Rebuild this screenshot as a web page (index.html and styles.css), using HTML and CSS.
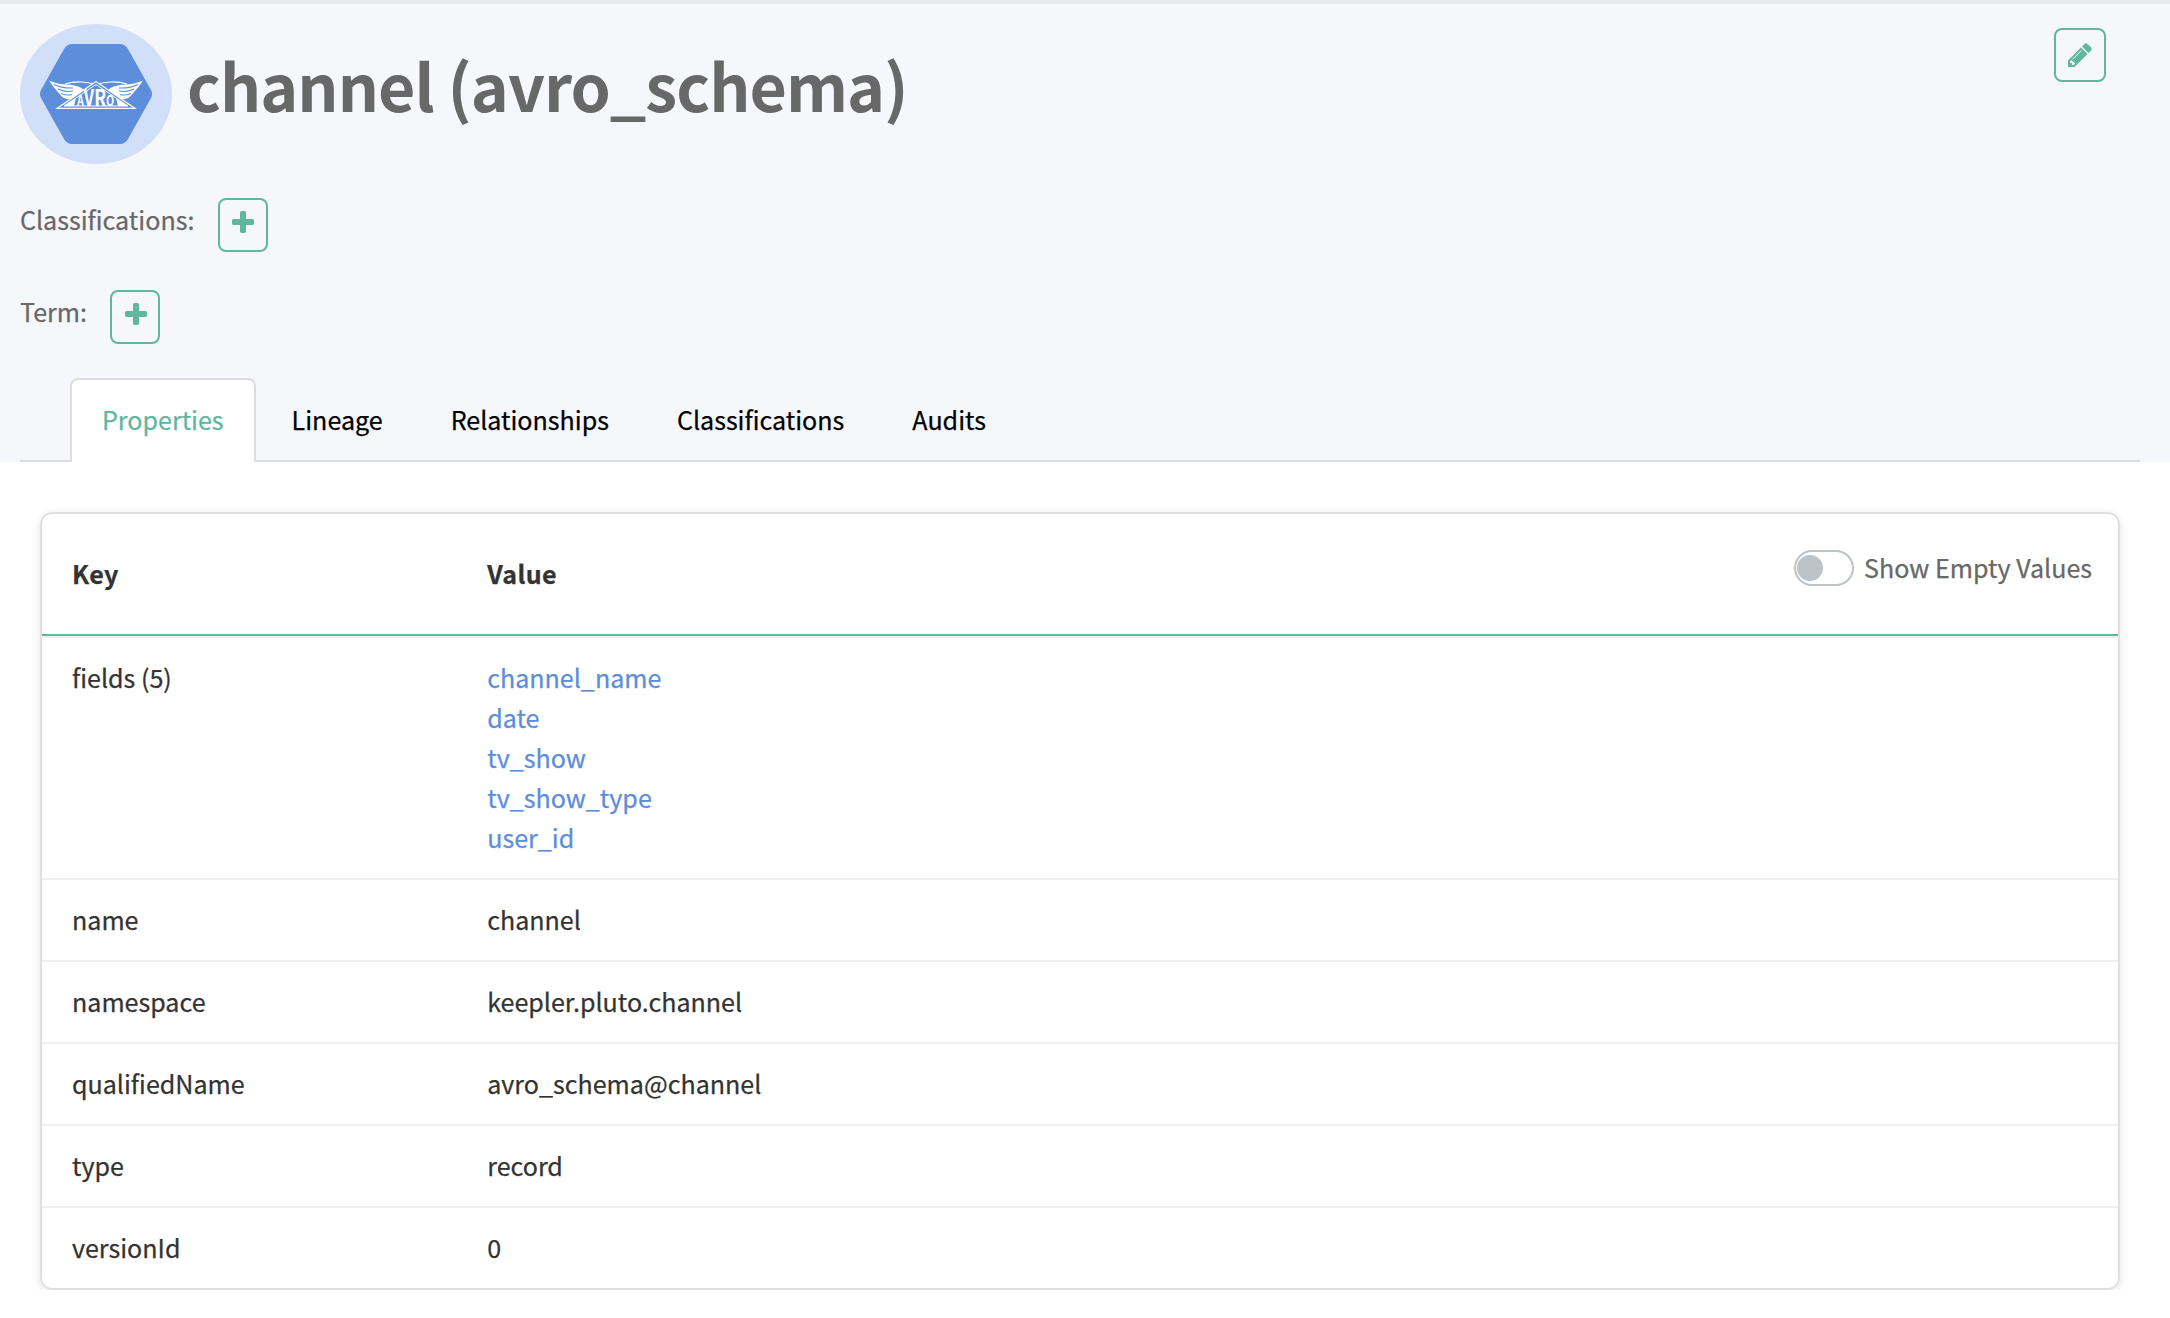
FILE: index.html
```html
<!DOCTYPE html>
<html lang="en">
<head>
<meta charset="utf-8">
<title>channel (avro_schema)</title>
<link rel="stylesheet" href="styles.css">
</head>
<body>
<header class="entity-header">
  <div class="title-row">
    <div class="entity-icon">
      <svg width="152" height="140" viewBox="0 0 152 140">
        <path fill="#5c8edc" d="M32 20h48q5 0 8 5l23 41q2 4 0 8l-23 41q-3 5-8 5H32q-5 0-8-5L1 74q-2-4 0-8L24 25q3-5 8-5z" transform="translate(20)"/>
        <!-- wings -->
        <path fill="#fff" d="M29 56.500Q38 60.500 47 60.500Q59 61 64 66L53 75.500Q47 76 43 73.500Q40 71 38 68Q33 63 29 56.500zM123 56.500Q114 60.500 105 60.500Q93 61 88 66L99 75.500Q105 76 109 73.500Q112 71 114 68Q119 63 123 56.500z"/>
        <path fill="none" stroke="#5c8edc" stroke-width="1.100" d="M34 60.500Q42 64.500 53 64M38 65Q45 68.500 53 67M41 69.500Q47 72 52 70.500M118 60.500Q110 64.500 99 64M114 65Q107 68.500 99 67M111 69.500Q105 72 100 70.500"/>
        <path fill="none" stroke="#fff" stroke-width="1.100" d="M45 60Q53 57.500 62 58Q70 58.500 76 61Q82 58.500 90 58Q99 57.500 107 60"/>
        <!-- framed triangle -->
        <path fill="#5c8edc" stroke="#fff" stroke-width="1.200" d="M76 57.500L37 84.400H115z"/>
        <path fill="none" stroke="#fff" stroke-width="1" d="M76 60.500L44 82H108z"/>
        <path fill="#fff" d="M44 82l12-8-2 8zM108 82l-12-8 2 8z"/>
        <text class="logo-word" transform="translate(57 82) scale(.76 1)"><tspan font-size="14">A</tspan><tspan font-size="22">V</tspan><tspan font-size="23">R</tspan><tspan font-size="14">O</tspan></text>
      </svg>
    </div>
    <h1 class="entity-title">channel (avro_schema)</h1>
    <button class="btn btn-edit" aria-label="Edit"><svg width="28" height="28" viewBox="0 0 1792 1792"><path fill="currentColor" d="M491 1536l91-91-235-235-91 91v107h128v128h107zm523-928q0-22-22-22-10 0-17 7l-542 542q-7 7-7 17 0 22 22 22 10 0 17-7l542-542q7-7 7-17zm-54-192l416 416-832 832h-416v-416zm683 96q0 53-37 90l-166 166-416-416 166-165q36-38 90-38 53 0 91 38l235 234q37 39 37 91z"/></svg></button>
  </div>
  <div class="tag-row">
    <span class="tag-label">Classifications:</span>
    <button class="btn btn-add" aria-label="Add classification"><svg width="28" height="28" viewBox="0 0 1792 1792"><path fill="currentColor" d="M1600 736v192q0 40-28 68t-68 28h-416v416q0 40-28 68t-68 28h-192q-40 0-68-28t-28-68v-416h-416q-40 0-68-28t-28-68v-192q0-40 28-68t68-28h416v-416q0-40 28-68t68-28h192q40 0 68 28t28 68v416h416q40 0 68 28t28 68z"/></svg></button>
  </div>
  <div class="tag-row">
    <span class="tag-label">Term:</span>
    <button class="btn btn-add" aria-label="Add term"><svg width="28" height="28" viewBox="0 0 1792 1792"><path fill="currentColor" d="M1600 736v192q0 40-28 68t-68 28h-416v416q0 40-28 68t-68 28h-192q-40 0-68-28t-28-68v-416h-416q-40 0-68-28t-28-68v-192q0-40 28-68t68-28h416v-416q0-40 28-68t68-28h192q40 0 68 28t28 68v416h416q40 0 68 28t28 68z"/></svg></button>
  </div>
  <nav class="tabs">
    <a class="tab active">Properties</a>
    <a class="tab">Lineage</a>
    <a class="tab">Relationships</a>
    <a class="tab">Classifications</a>
    <a class="tab">Audits</a>
  </nav>
</header>
<main class="card">
  <div class="row head">
    <div class="key">Key</div>
    <div class="value">Value</div>
    <label class="toggle"><span class="switch"></span><span class="toggle-label">Show Empty Values</span></label>
  </div>
  <div class="row"><div class="key">fields (5)</div><div class="value links"><a>channel_name</a><a>date</a><a>tv_show</a><a>tv_show_type</a><a>user_id</a></div></div>
  <div class="row"><div class="key">name</div><div class="value">channel</div></div>
  <div class="row"><div class="key">namespace</div><div class="value">keepler.pluto.channel</div></div>
  <div class="row"><div class="key">qualifiedName</div><div class="value">avro_schema@channel</div></div>
  <div class="row"><div class="key">type</div><div class="value">record</div></div>
  <div class="row"><div class="key">versionId</div><div class="value">0</div></div>
</main>
</body>
</html>
```
FILE: styles.css
```css
* { box-sizing: border-box; }
body {
  margin: 0;
  background: #fff;
  color: #333;
  font: 25.07px/40px "Noto Sans CJK SC", "Noto Sans", sans-serif;
  -webkit-text-stroke: .25px currentColor;
}
.entity-header {
  height: 462px;
  padding: 20px 30px 0 20px;
  border-top: 4px solid #e7e8ec;
  background: #f6f7fb;
}
.title-row { display: flex; height: 140px; align-items: flex-start; }
.entity-icon {
  width: 152px;
  height: 140px;
  border-radius: 50%;
  background: #d2dff8;
}
.entity-icon svg { display: block; }
.logo-word {
  font-family: "Noto Sans CJK SC", sans-serif;
  font-weight: bold;
  fill: #fff;
  -webkit-text-stroke: 0;
}
.entity-title {
  flex: 1;
  margin: 10px 0 0 15px;
  color: #686868;
  font-size: 64.4px;
  line-height: 100px;
  font-weight: bold;
  letter-spacing: -.95px;
  -webkit-text-stroke: 0;
}
.btn {
  display: flex;
  align-items: center;
  justify-content: center;
  padding: 0;
  border: 2px solid #5fb79d;
  border-radius: 8px;
  background: transparent;
  color: #5fb79d;
}
.btn-edit { width: 52px; height: 54px; margin: 4px 34px 0 0; }
.btn-add { width: 50px; height: 54px; padding: 0 0 4px 1px; }
.tag-row { display: flex; height: 54px; margin-top: 34px; gap: 23.5px; color: #686868; }
.tag-row + .tag-row { margin-top: 38px; }
.tag-label { line-height: 42px; }
.tabs {
  display: flex;
  gap: 4px;
  height: 84px;
  margin-top: 34px;
  padding-left: 50px;
  border-bottom: 2px solid #ddd;
}
.tab {
  height: 84px;
  padding: 0 30px;
  border: 2px solid transparent;
  border-bottom: 0;
  color: #000;
  line-height: 78px;
}
.tab.active {
  border-color: #ddd;
  border-radius: 8px 8px 0 0;
  background: #fff;
  color: #5fb79d;
}
.card {
  margin: 50px 50px 0 40px;
  border: 2px solid #e0e0e0;
  border-radius: 12px;
  box-shadow: 0 2px 10px rgba(0, 0, 0, .1);
}
.row {
  display: grid;
  grid-template-columns: 20% 1fr auto;
  padding: 19px 0 21px;
  border-top: 2px solid #eee;
}
.row.head {
  height: 122px;
  padding: 39px 0 0;
  border-top: 0;
  border-bottom: 2px solid #5fb79d;
}
.head .key, .head .value { font-weight: bold; letter-spacing: .4px; }
.key, .value { padding-left: 30px; }
.links { display: flex; flex-direction: column; color: #5c8edc; }
.toggle {
  display: flex;
  align-items: center;
  gap: 10px;
  height: 36px;
  margin: -3px 26px 0 0;
  color: #686868;
}
.toggle-label { padding-bottom: 2px; }
.switch {
  width: 60px;
  height: 36px;
  padding: 3px 1px;
  border: 2px solid #bdc3c7;
  border-radius: 18px;
}
.switch::before {
  content: "";
  display: block;
  width: 26px;
  height: 26px;
  border-radius: 50%;
  background: #bdc3c7;
}
```
